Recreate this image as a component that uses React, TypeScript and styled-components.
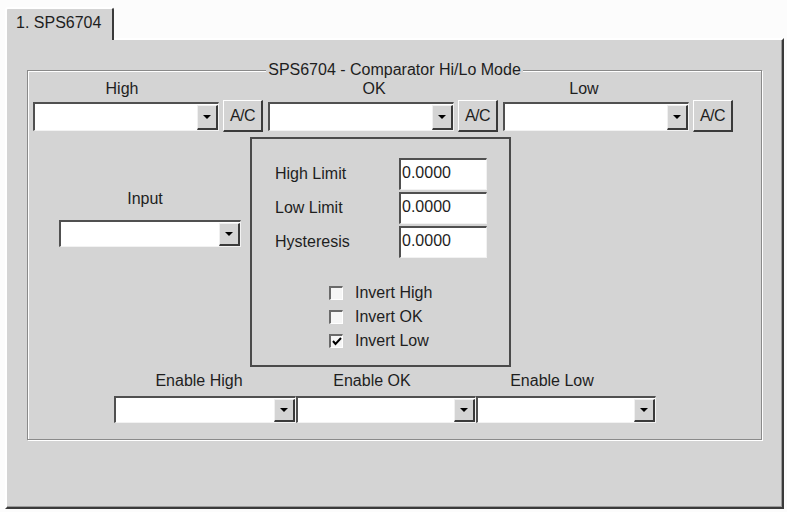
import React from 'react';
import styled, { createGlobalStyle } from 'styled-components';

const GlobalStyle = createGlobalStyle`
  html, body {
    margin: 0;
    padding: 0;
    background: #fcfcfc;
  }
  body {
    font-family: "Liberation Sans", Arial, sans-serif;
    font-size: 16px;
    color: #1e1e1e;
  }
`;

const FACE = '#d4d4d4';
const DARK = '#3a3a3a';

const Page = styled.div`
  width: 787px;
  height: 512px;
  box-sizing: border-box;
  padding: 7px 3px 3px 5px;
  display: flex;
  flex-direction: column;
`;

const TabStrip = styled.div`
  display: flex;
  height: 31px;
`;

const Tab = styled.div`
  width: 109px;
  height: 33px;
  box-sizing: border-box;
  background: ${FACE};
  border-top: 2px solid #fff;
  border-left: 2px solid #fff;
  border-right: 2px solid ${DARK};
  border-radius: 3px 3px 0 0;
  padding: 5px 0 0 9px;
  line-height: 18px;
  position: relative;
  z-index: 1;
`;

const Panel = styled.div`
  flex: 1;
  box-sizing: border-box;
  background: ${FACE};
  border-top: 2px solid #fff;
  border-left: 2px solid #fff;
  border-right: 2px solid ${DARK};
  border-bottom: 2px solid ${DARK};
  box-shadow: inset -1px -1px #9a9a9a;
  padding: 22px 0 0 20px;
`;

const GroupBox = styled.fieldset`
  margin: 0;
  padding: 0;
  width: 735px;
  height: 378px;
  box-sizing: border-box;
  border: 1px solid #8a8a8a;
  box-shadow: inset 1px 1px #fff, 1px 1px #fff;
  display: flex;
  flex-direction: column;
`;

const GroupTitle = styled.legend`
  margin: 0 auto;
  padding: 0 2px;
  line-height: 16px;
  background: ${FACE};
`;

const TopRow = styled.div`
  display: flex;
  gap: 5px;
  padding: 2px 0 0 5px;
`;

const Column = styled.div`
  display: flex;
  flex-direction: column;
`;

const FieldLabel = styled.div<{ $w: number; $shift: number }>`
  width: ${p => p.$w}px;
  margin-left: ${p => p.$shift}px;
  line-height: 18px;
  height: 18px;
  text-align: center;
  white-space: nowrap;
`;

const ComboLine = styled.div<{ $gap?: number }>`
  display: flex;
  align-items: center;
  gap: 4px;
  margin-top: ${p => p.$gap ?? 2}px;
`;

const ComboBox = styled.div<{ $w: number; $h: number }>`
  width: ${p => p.$w}px;
  height: ${p => p.$h}px;
  box-sizing: border-box;
  display: flex;
  justify-content: flex-end;
  background: #fff;
  border-top: 2px solid #505050;
  border-left: 2px solid #505050;
  border-right: 1px solid #f2f2f2;
  border-bottom: 1px solid #f2f2f2;
  padding: 1px 0 0 0;
`;

const DropButton = styled.div`
  width: 21px;
  box-sizing: border-box;
  background: ${FACE};
  border-top: 1px solid #f0f0f0;
  border-left: 1px solid #f0f0f0;
  border-right: 2px solid ${DARK};
  border-bottom: 2px solid ${DARK};
  display: flex;
  align-items: center;
  justify-content: center;
`;

const Arrow = styled.span`
  width: 0;
  height: 0;
  border-left: 4px solid transparent;
  border-right: 4px solid transparent;
  border-top: 4px solid #000;
`;

const PushButton = styled.div`
  width: 40px;
  height: 32px;
  box-sizing: border-box;
  background: ${FACE};
  border-top: 1px solid #fff;
  border-left: 1px solid #fff;
  border-right: 2px solid ${DARK};
  border-bottom: 2px solid ${DARK};
  display: flex;
  align-items: center;
  justify-content: center;
  letter-spacing: -0.5px;
`;

const MiddleRow = styled.div`
  display: flex;
  margin-top: 5px;
`;

const InputColumn = styled.div`
  display: flex;
  flex-direction: column;
  padding: 53px 0 0 31px;
  width: 182px;
  margin-right: 9px;
  gap: 12px;
`;

const LimitsBox = styled.div`
  width: 261px;
  height: 230px;
  box-sizing: border-box;
  border: 2px solid #4a4a4a;
  padding: 19px 0 0 23px;
  display: flex;
  flex-direction: column;
`;

const LimitGrid = styled.div`
  display: grid;
  grid-template-columns: 124px 88px;
  row-gap: 2px;
  align-items: center;
`;

const LimitInput = styled.input`
  width: 88px;
  height: 32px;
  box-sizing: border-box;
  margin: 0;
  background: #fff;
  border-top: 2px solid #505050;
  border-left: 2px solid #505050;
  border-right: 1px solid #f2f2f2;
  border-bottom: 1px solid #f2f2f2;
  padding: 0 0 3px 1px;
  font: inherit;
  color: inherit;
  outline: none;
`;

const CheckList = styled.div`
  display: flex;
  flex-direction: column;
  margin: 23px 0 0 54px;
`;

const CheckRow = styled.label`
  display: flex;
  align-items: center;
  gap: 12px;
  height: 24px;
`;

const CheckBox = styled.span`
  width: 14px;
  height: 14px;
  box-sizing: border-box;
  background: #f6f6f6;
  border-top: 2px solid #6a6a6a;
  border-left: 2px solid #6a6a6a;
  border-right: 1px solid #fff;
  border-bottom: 1px solid #fff;
  display: flex;
  align-items: center;
  justify-content: center;
`;

const BottomSection = styled.div`
  display: flex;
  padding: 5px 0 0 86px;
`;

const Check = ({ checked, label }: { checked?: boolean; label: string }) => (
  <CheckRow>
    <CheckBox>
      {checked && (
        <svg width="10" height="9" viewBox="0 0 10 9">
          <path d="M1 4 L3.5 7 L9 1" fill="none" stroke="#000" strokeWidth="2" />
        </svg>
      )}
    </CheckBox>
    <span>{label}</span>
  </CheckRow>
);

const Combo = ({ w, h }: { w: number; h: number }) => (
  <ComboBox $w={w} $h={h}>
    <DropButton>
      <Arrow />
    </DropButton>
  </ComboBox>
);

const topColumns = [
  { label: 'High', shift: -4 },
  { label: 'OK', shift: 13 },
  { label: 'Low', shift: -12 },
];

const bottomColumns = [
  { label: 'Enable High', w: 182, shift: -6 },
  { label: 'Enable OK', w: 180, shift: -14 },
  { label: 'Enable Low', w: 180, shift: -14 },
];

const limits = ['High Limit', 'Low Limit', 'Hysteresis'];

export default function App() {
  return (
    <>
      <GlobalStyle />
      <Page>
        <TabStrip>
          <Tab>1. SPS6704</Tab>
        </TabStrip>
        <Panel>
          <GroupBox>
            <GroupTitle>SPS6704 - Comparator Hi/Lo Mode</GroupTitle>
            <TopRow>
              {topColumns.map(col => (
                <Column key={col.label}>
                  <FieldLabel $w={186} $shift={col.shift}>{col.label}</FieldLabel>
                  <ComboLine>
                    <Combo w={186} h={29} />
                    <PushButton>A/C</PushButton>
                  </ComboLine>
                </Column>
              ))}
            </TopRow>
            <MiddleRow>
              <InputColumn>
                <FieldLabel $w={182} $shift={-5}>Input</FieldLabel>
                <Combo w={182} h={27} />
              </InputColumn>
              <LimitsBox>
                <LimitGrid>
                  {limits.map(name => (
                    <React.Fragment key={name}>
                      <span>{name}</span>
                      <LimitInput readOnly value="0.0000" />
                    </React.Fragment>
                  ))}
                </LimitGrid>
                <CheckList>
                  <Check label="Invert High" />
                  <Check label="Invert OK" />
                  <Check label="Invert Low" checked />
                </CheckList>
              </LimitsBox>
            </MiddleRow>
            <BottomSection>
              {bottomColumns.map(col => (
                <Column key={col.label}>
                  <FieldLabel $w={col.w} $shift={col.shift}>{col.label}</FieldLabel>
                  <ComboLine $gap={6}>
                    <Combo w={col.w} h={27} />
                  </ComboLine>
                </Column>
              ))}
            </BottomSection>
          </GroupBox>
        </Panel>
      </Page>
    </>
  );
}
